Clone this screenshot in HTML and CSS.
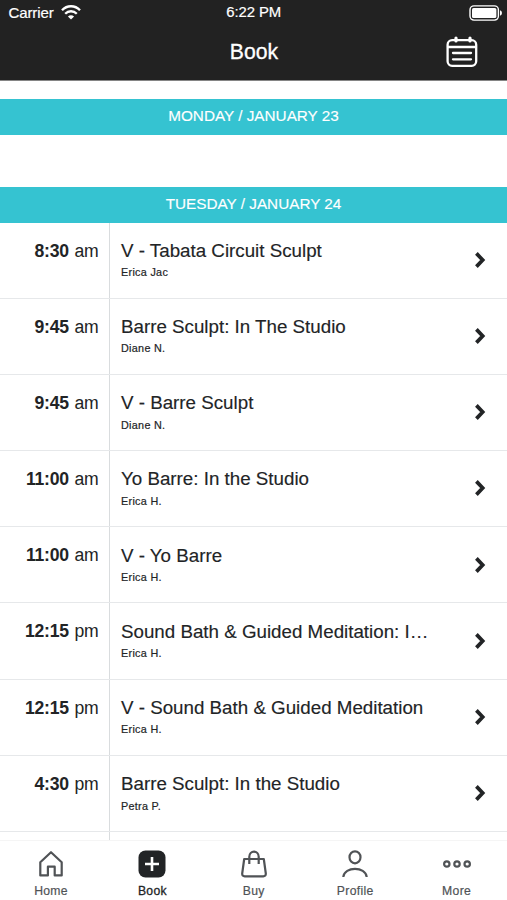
FILE: index.html
```html
<!DOCTYPE html>
<html lang="en">
<head>
<meta charset="utf-8">
<title>Book</title>
<link rel="stylesheet" href="styles.css">
</head>
<body>
<div class="app">
  <header class="header">
    <div class="status">
      <div class="carrier"><span>Carrier</span>
        <svg class="wifi" width="20" height="15" viewBox="0 0 20 15" fill="none" stroke="#fff" stroke-width="2.3"><path d="M1 5.3C6-.1 14-.1 19 5.3M4.2 8.8C7.5 5.4 12.5 5.4 15.8 8.8"/><path d="M10 14.6L6.9 11.4Q10 9 13.1 11.4Z" fill="#fff" stroke="none"/></svg>
      </div>
      <span class="clock">6:22 PM</span>
      <svg class="battery" width="34" height="16" viewBox="0 0 34 16"><rect x="1" y=".9" width="28.4" height="14.2" rx="4" fill="none" stroke="#fff" stroke-width="1.4"/><rect x="3" y="3" width="24.4" height="10" rx="1.6" fill="#fff"/><path d="M31 5.2Q33 6 33 8T31 10.8Z" fill="#fff"/></svg>
    </div>
    <div class="titlebar">
      <h1>Book</h1>
      <svg class="calendar" width="32" height="32" viewBox="0 0 32 32" fill="none" stroke="#fff" stroke-width="2.3" stroke-linecap="round"><rect x="1.6" y="4.2" width="28.6" height="25.6" rx="4.5"/><path d="M2 11H30M7 17H25M7 23.3H25"/><path d="M10 2V5M24 2V5" stroke-width="3.2"/></svg>
    </div>
  </header>
  <main class="schedule">
    <h2 class="day">MONDAY / JANUARY 23</h2>
    <h2 class="day tuesday">TUESDAY / JANUARY 24</h2>
    <ul class="classes">
      <li><div class="time"><b>8:30</b> am</div><div class="info"><h3>V - Tabata Circuit Sculpt</h3><p>Erica Jac</p></div><svg class="chevron" viewBox="0 0 12 18"><path d="M2.4 2.4L8.7 9L2.4 15.6"/></svg></li>
      <li><div class="time"><b>9:45</b> am</div><div class="info"><h3>Barre Sculpt: In The Studio</h3><p>Diane N.</p></div><svg class="chevron" viewBox="0 0 12 18"><path d="M2.4 2.4L8.7 9L2.4 15.6"/></svg></li>
      <li><div class="time"><b>9:45</b> am</div><div class="info"><h3>V - Barre Sculpt</h3><p>Diane N.</p></div><svg class="chevron" viewBox="0 0 12 18"><path d="M2.4 2.4L8.7 9L2.4 15.6"/></svg></li>
      <li><div class="time"><b>11:00</b> am</div><div class="info"><h3>Yo Barre: In the Studio</h3><p>Erica H.</p></div><svg class="chevron" viewBox="0 0 12 18"><path d="M2.4 2.4L8.7 9L2.4 15.6"/></svg></li>
      <li><div class="time"><b>11:00</b> am</div><div class="info"><h3>V - Yo Barre</h3><p>Erica H.</p></div><svg class="chevron" viewBox="0 0 12 18"><path d="M2.4 2.4L8.7 9L2.4 15.6"/></svg></li>
      <li><div class="time"><b>12:15</b> pm</div><div class="info"><h3>Sound Bath &amp; Guided Meditation: I…</h3><p>Erica H.</p></div><svg class="chevron" viewBox="0 0 12 18"><path d="M2.4 2.4L8.7 9L2.4 15.6"/></svg></li>
      <li><div class="time"><b>12:15</b> pm</div><div class="info"><h3>V - Sound Bath &amp; Guided Meditation</h3><p>Erica H.</p></div><svg class="chevron" viewBox="0 0 12 18"><path d="M2.4 2.4L8.7 9L2.4 15.6"/></svg></li>
      <li><div class="time"><b>4:30</b> pm</div><div class="info"><h3>Barre Sculpt: In the Studio</h3><p>Petra P.</p></div><svg class="chevron" viewBox="0 0 12 18"><path d="M2.4 2.4L8.7 9L2.4 15.6"/></svg></li>
      <li><div class="time"></div><div class="info"></div></li>
    </ul>
  </main>
  <nav class="tabs">
    <div class="tab"><svg viewBox="0 0 28 28"><path d="M3.3 12.2L14 2.2L24.7 12.2V25.4H17.7V16.7H10.9V25.4H3.3Z"/></svg><span>Home</span></div>
    <div class="tab active"><svg viewBox="0 0 28 28"><rect x=".5" y=".5" width="27" height="27" rx="7" fill="#222426" stroke="none"/><path class="plus" d="M14 7V21M7 14H21"/></svg><span>Book</span></div>
    <div class="tab"><svg viewBox="0 0 28 28"><path d="M4.2 9H23.8L25.8 23.5Q26 26.3 23.3 26.3H4.7Q2 26.3 2.2 23.5ZM9.3 14V6.8C9.3-.1 18.7-.1 18.7 6.8V14"/></svg><span>Buy</span></div>
    <div class="tab"><svg viewBox="0 0 28 28"><ellipse cx="14" cy="7.3" rx="5.5" ry="6"/><path d="M2.3 27C3.4 16.2 24.6 16.2 25.7 27"/></svg><span>Profile</span></div>
    <div class="tab"><svg viewBox="0 0 28 28"><circle cx="3.8" cy="14" r="2.7"/><circle cx="14" cy="14" r="2.7"/><circle cx="24.2" cy="14" r="2.7"/></svg><span>More</span></div>
  </nav>
</div>
</body>
</html>
```
FILE: styles.css
```css
* { box-sizing: border-box; }
body { margin: 0; background: #fff; font-family: "Liberation Sans", Arial, sans-serif; color: #222426; }
h1, h2, h3, p, ul { margin: 0; padding: 0; font-weight: normal; }
svg { display: block; flex: none; }
.app { width: 507px; height: 900px; display: flex; flex-direction: column; overflow: hidden; }
.header { flex: none; height: 81px; background: #222; border-bottom: 1px solid #858585; color: #fff; }
.status { display: grid; grid-template-columns: 1fr auto 1fr; align-items: center; height: 25px; padding: 0 4px 0 8.5px; font-size: 15px; letter-spacing: -.1px; -webkit-text-stroke: .2px #fff; }
.carrier { display: flex; align-items: center; gap: 7px; }
.clock { margin: 0 4px 1px 0; font-size: 14.9px; }
.battery { justify-self: end; }
.titlebar { display: grid; grid-template-columns: 1fr auto 1fr; align-items: center; height: 54px; padding: 0 29px; }
.titlebar h1 { grid-column: 2; padding-left: 1px; font-size: 21.2px; -webkit-text-stroke: .3px #fff; }
.calendar { justify-self: end; }
.schedule { flex: 1; min-height: 0; overflow: hidden; padding-top: 18px; }
.day { height: 35.5px; line-height: 34px; background: #35c3d1; color: #fff; font-size: 15.3px; text-align: center; -webkit-text-stroke: .15px #fff; }
.tuesday { margin-top: 52.5px; }
.classes { list-style: none; }
.classes li { display: flex; height: 76.2px; border-bottom: 1px solid #e6e8ea; }
.time { width: 110px; border-right: 1px solid #d9dcde; padding: 17px 10.5px 0 0; text-align: right; font-size: 17.6px; line-height: 22px; letter-spacing: -.25px; word-spacing: 1.2px; }
.info { flex: 1; min-width: 0; padding: 17.3px 0 0 11px; }
.info h3 { font-size: 18.75px; line-height: 22px; white-space: nowrap; -webkit-text-stroke: .15px #222426; }
.info p { margin-top: 3.5px; font-size: 10.8px; line-height: 14px; letter-spacing: .3px; -webkit-text-stroke: .2px #222426; }
.chevron { width: 12px; height: 18px; margin: 28.3px 21px 0 0; fill: none; stroke: #222426; stroke-width: 3.7; }
.tabs { flex: none; height: 60px; display: grid; grid-template-columns: repeat(5, 1fr); border-top: 1px solid #f5f5f5; background: #fff; }
.tab { display: flex; flex-direction: column; align-items: center; padding: 9px 0 0 .6px; color: #505356; font-size: 12.2px; line-height: 14px; letter-spacing: .3px; -webkit-text-stroke: .2px #505356; }
.tab svg { width: 28px; height: 28px; margin-bottom: 6px; fill: none; stroke: #505356; stroke-width: 2.2; stroke-linejoin: round; }
.tab .plus { stroke: #fff; stroke-width: 2.6; }
.tab.active { color: #222426; -webkit-text-stroke: .3px #222426; }
```
